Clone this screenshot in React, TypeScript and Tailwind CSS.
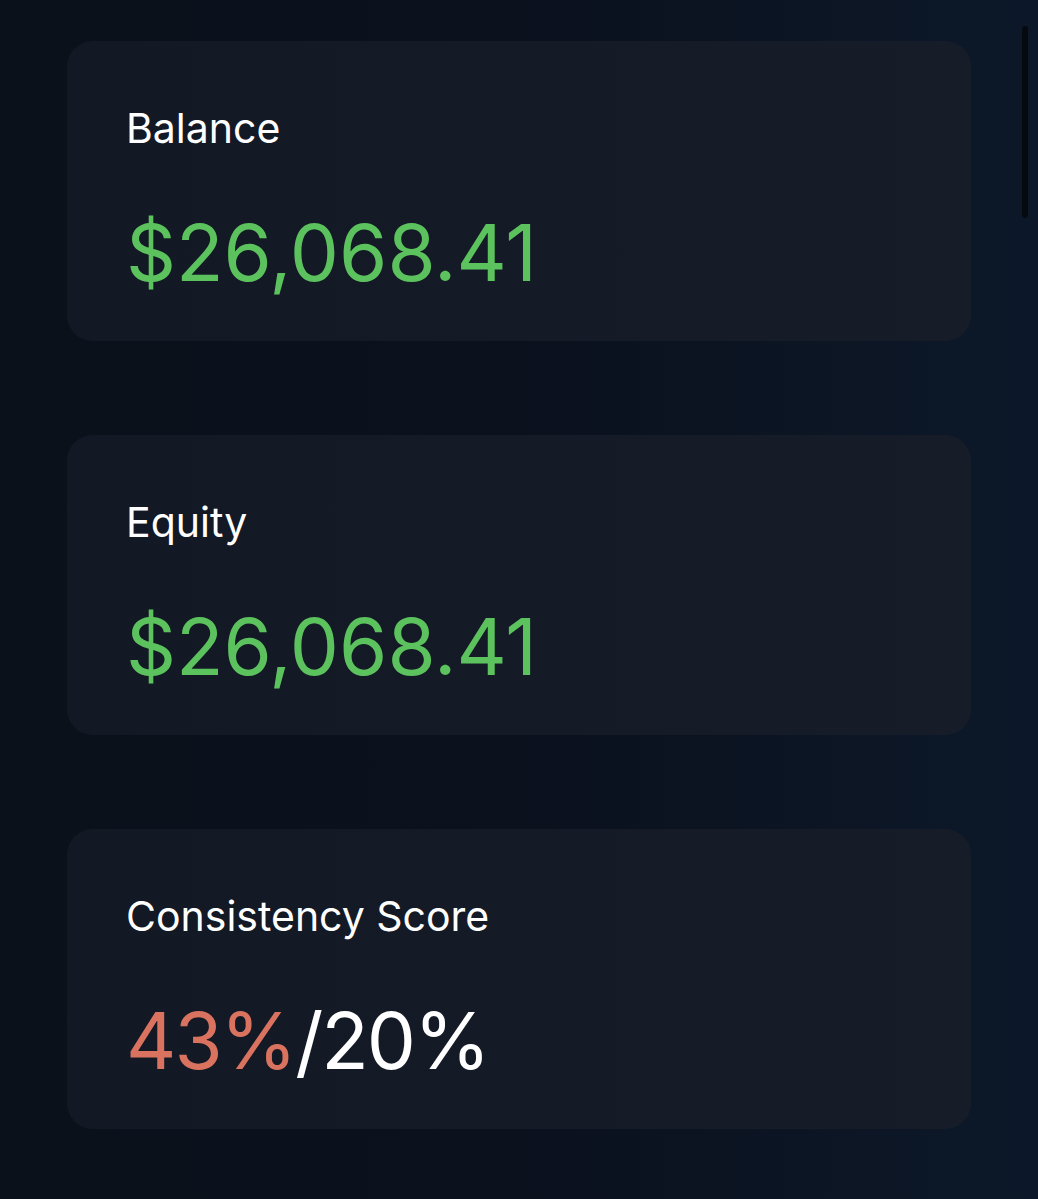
import React from "react";

function Card({ label, children }: { label: string; children: React.ReactNode }) {
  return (
    <div className="h-[300px] w-[904px] rounded-[26px] bg-gradient-to-r from-[#121824] to-[#161d29] pl-[59px] pt-[64px]">
      <div className="text-[41px] leading-[46px] text-white">{label}</div>
      <div className="mt-[62px] text-[78px] leading-[80px]">{children}</div>
    </div>
  );
}

export default function App() {
  return (
    <div
      className="relative h-[1199px] w-[1038px] overflow-hidden bg-gradient-to-r from-[#0a111b] via-[#0b111d] to-[#0c1829] pl-[67px] pt-[41px]"
      style={{ fontFamily: "Inter, 'Noto Sans', sans-serif" }}
    >
      <div className="flex flex-col gap-[94px]">
        <Card label="Balance">
          <span className="text-[#5cc25e]">$26,068.41</span>
        </Card>
        <Card label="Equity">
          <span className="text-[#5cc25e]">$26,068.41</span>
        </Card>
        <Card label="Consistency Score">
          <span className="tracking-[-2px]">
            <span className="text-[#d9735f]">43%</span>
            <span className="text-white">/20%</span>
          </span>
        </Card>
      </div>
      <div className="absolute right-[10px] top-[26px] h-[192px] w-[6px] rounded-full bg-[#050a10]" />
    </div>
  );
}
